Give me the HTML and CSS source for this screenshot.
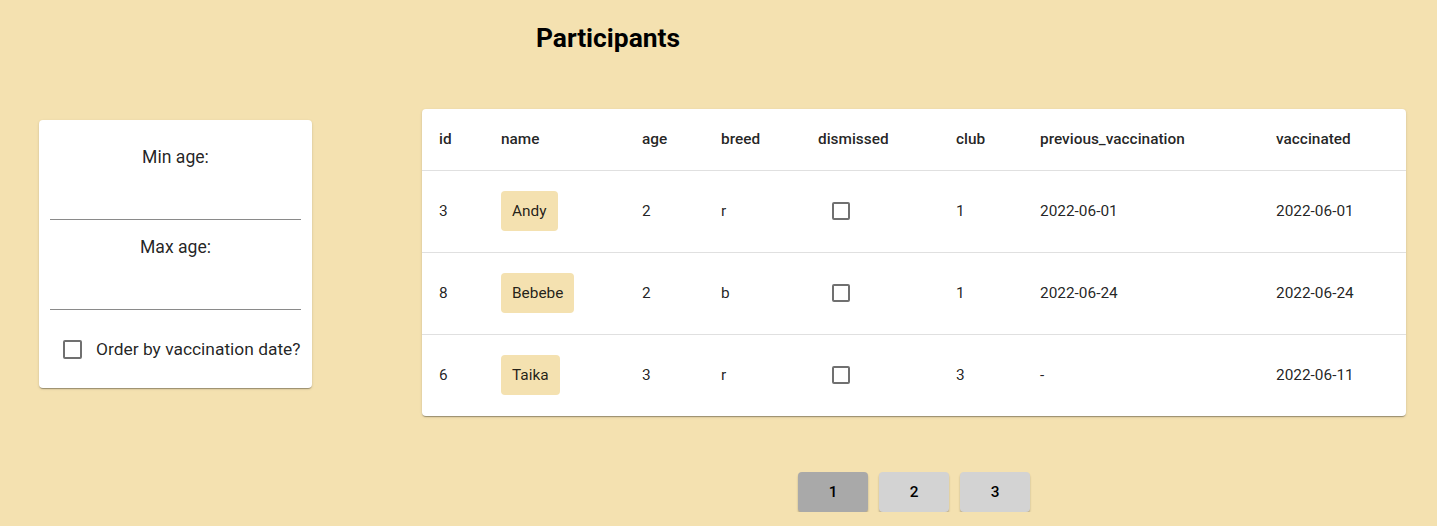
FILE: index.html
```html
<!DOCTYPE html>
<html lang="en">
<head>
<meta charset="utf-8">
<title>Participants</title>
<link rel="stylesheet" href="styles.css">
</head>
<body>
<div class="page">
  <h1 class="title">Participants</h1>
  <div class="layout">
    <aside class="filters">
      <div class="field">
        <label class="field-label" for="min">Min age:</label>
        <input class="field-input" id="min" type="text">
      </div>
      <div class="field">
        <label class="field-label" for="max">Max age:</label>
        <input class="field-input" id="max" type="text">
      </div>
      <label class="check-row">
        <span class="box"></span>
        <span class="check-text">Order by vaccination date?</span>
      </label>
    </aside>
    <section class="results">
      <div class="table-card">
        <table class="grid">
          <colgroup>
            <col class="c-id"><col class="c-name"><col class="c-age"><col class="c-breed">
            <col class="c-dis"><col class="c-club"><col class="c-prev"><col class="c-vacc">
          </colgroup>
          <thead>
            <tr>
              <th>id</th><th>name</th><th>age</th><th>breed</th><th>dismissed</th><th>club</th><th>previous_vaccination</th><th>vaccinated</th>
            </tr>
          </thead>
          <tbody>
            <tr>
              <td>3</td><td><span class="chip">Andy</span></td><td>2</td><td>r</td><td><span class="box box-cell"></span></td><td>1</td><td>2022-06-01</td><td>2022-06-01</td>
            </tr>
            <tr>
              <td>8</td><td><span class="chip">Bebebe</span></td><td>2</td><td>b</td><td><span class="box box-cell"></span></td><td>1</td><td>2022-06-24</td><td>2022-06-24</td>
            </tr>
            <tr>
              <td>6</td><td><span class="chip">Taika</span></td><td>3</td><td>r</td><td><span class="box box-cell"></span></td><td>3</td><td>-</td><td>2022-06-11</td>
            </tr>
          </tbody>
        </table>
      </div>
      <nav class="pager">
        <button class="page-btn active">1</button>
        <button class="page-btn">2</button>
        <button class="page-btn">3</button>
      </nav>
    </section>
  </div>
</div>
</body>
</html>
```

FILE: styles.css
```css
html, body {
  margin: 0;
  padding: 0;
}
body {
  background: #f4e1b0;
  font-family: Roboto, "Liberation Sans", Arial, sans-serif;
  color: rgba(0, 0, 0, 0.87);
}
.page {
  width: 1437px;
}
.title {
  width: 1216px;
  margin: 24px 0 0;
  height: 28px;
  line-height: 28px;
  font-size: 26.4px;
  font-weight: 700;
  text-align: center;
  color: #000;
}
.layout {
  display: flex;
  align-items: flex-start;
  gap: 110px;
  padding-left: 39px;
  margin-top: 57px;
}
.filters {
  width: 273px;
  box-sizing: border-box;
  margin-top: 11px;
  padding: 25px 11px 0;
  background: #fff;
  border-radius: 4px;
  box-shadow: 0 2px 1px -1px rgba(0,0,0,.2), 0 1px 1px 0 rgba(0,0,0,.14), 0 1px 3px 0 rgba(0,0,0,.12);
  display: flex;
  flex-direction: column;
}
.field {
  display: flex;
  flex-direction: column;
}
.field + .field {
  margin-top: 15px;
}
.field-label {
  font-size: 17.6px;
  line-height: 24px;
  text-align: center;
  color: rgba(0, 0, 0, 0.87);
}
.field-input {
  height: 51px;
  box-sizing: border-box;
  border: none;
  border-bottom: 1px solid #8a8a8a;
  background: transparent;
  outline: none;
  font: inherit;
  padding: 0;
}
.check-row {
  display: flex;
  align-items: center;
  gap: 14px;
  height: 42px;
  padding: 18px 0 18px 13px;
}
.check-text {
  font-size: 17.4px;
  line-height: 24px;
  white-space: nowrap;
}
.box {
  display: inline-block;
  width: 19px;
  height: 19px;
  box-sizing: border-box;
  border: 2px solid #707070;
  border-radius: 2px;
  flex: none;
}
.results {
  width: 984px;
  display: flex;
  flex-direction: column;
  align-items: center;
}
.table-card {
  width: 984px;
  background: #fff;
  border-radius: 4px;
  overflow: hidden;
  box-shadow: 0 2px 1px -1px rgba(0,0,0,.2), 0 1px 1px 0 rgba(0,0,0,.14), 0 1px 3px 0 rgba(0,0,0,.12);
}
.grid {
  width: 100%;
  border-collapse: collapse;
  table-layout: fixed;
  font-size: 15.4px;
}
.c-id { width: 63px; }
.c-name { width: 141px; }
.c-age { width: 79px; }
.c-breed { width: 97px; }
.c-dis { width: 138px; }
.c-club { width: 84px; }
.c-prev { width: 236px; }
.c-vacc { width: 146px; }
.grid th, .grid td {
  padding: 0 16px 2px;
  text-align: left;
  vertical-align: middle;
  border-bottom: 1px solid #e0e0e0;
  line-height: 24px;
}
.grid th:first-child, .grid td:first-child {
  padding-left: 17px;
}
.grid th {
  height: 59px;
  font-weight: 500;
}
.grid td {
  height: 79px;
  font-weight: 400;
}
.grid tbody tr:last-child td {
  border-bottom: none;
  height: 79px;
}
.chip {
  display: inline-block;
  height: 40px;
  line-height: 40px;
  padding: 0 11px;
  background: #f4e1b0;
  border-radius: 4px;
  color: rgba(0, 0, 0, 0.87);
}
.box-cell {
  width: 18px;
  height: 18px;
  margin-left: 14px;
  vertical-align: middle;
}
.pager {
  display: flex;
  gap: 11px;
  margin-top: 56px;
}
.page-btn {
  width: 70px;
  height: 40px;
  border: none;
  border-radius: 4px;
  background: #d3d3d3;
  font-family: Roboto, "Liberation Sans", Arial, sans-serif;
  font-size: 15.4px;
  font-weight: 500;
  color: #000;
  box-shadow: 0 2px 2px rgba(0,0,0,.25);
  padding: 0;
}
.page-btn.active {
  background: #a9a9a9;
}
```
